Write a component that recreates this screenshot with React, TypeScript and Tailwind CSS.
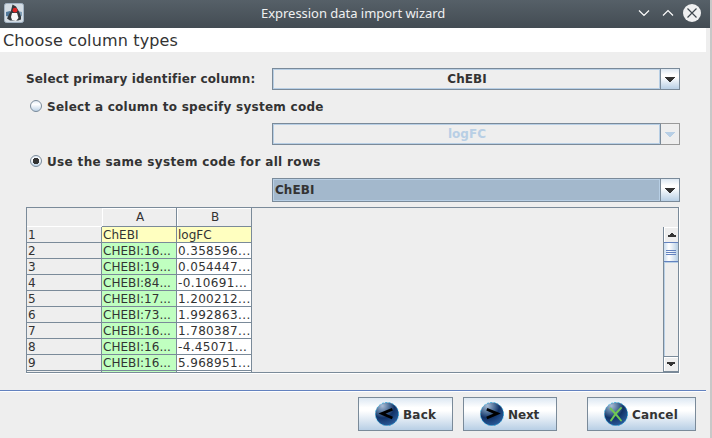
import React from "react";

const rows: [string, string][] = [
  ["ChEBI", "logFC"],
  ["CHEBI:16...", "0.358596..."],
  ["CHEBI:19...", "0.054447..."],
  ["CHEBI:84...", "-0.10691..."],
  ["CHEBI:17...", "1.200212..."],
  ["CHEBI:73...", "1.992863..."],
  ["CHEBI:16...", "1.780387..."],
  ["CHEBI:16...", "-4.45071..."],
  ["CHEBI:16...", "5.968951..."],
];

function Arrow({ color = "#333333", size = 10, up = false }: { color?: string; size?: number; up?: boolean }) {
  return size === 10 ? (
    <svg width="10" height="5" shapeRendering="crispEdges" fill={color}>
      <path d="M0 0h10v1H0zM1 1h8v1H1zM2 2h6v1H2zM3 3h4v1H3zM4 4h2v1H4z" />
    </svg>
  ) : (
    <svg width="8" height="4" viewBox="0 0 8 4" shapeRendering="crispEdges" fill={color}>
      <path d={up ? "M3 0h2v1H3zM2 1h4v1H2zM0 2h8v2H0z" : "M0 0h8v2H0zM2 2h4v1H2zM3 3h2v1H3z"} />
    </svg>
  );
}

function Combo({ text, kind }: { text: string; kind: "normal" | "disabled" | "selected" }) {
  const disabled = kind === "disabled";
  const selected = kind === "selected";
  return (
    <div className={`flex w-[408px] ${selected ? "h-6" : "h-[22px]"}`}>
      <div className="w-[388px] border border-r-0 border-[#7a8a99]">
        <div
          className={`flex h-full items-center border border-[#b8cfe5] ${
            selected ? "justify-start bg-[#a3b8cc] pl-[1px]" : "justify-center pl-px"
          } ${disabled ? "text-[#b8cfe5]" : ""}`}
        >
          <span className="tracking-[0.05px]">{text}</span>
        </div>
      </div>
      <div
        className={`flex w-5 items-center justify-center border ${
          disabled
            ? "border-[#999999] border-l-[#7a8a99]"
            : "border-[#7a8a99] bg-[linear-gradient(#dde8f3,#ffffff_30%,#ffffff_40%,#b8cfe5)]"
        }`}
      >
        <Arrow color={disabled ? "#b8cfe5" : "#333333"} />
      </div>
    </div>
  );
}

function Radio({ checked, label }: { checked?: boolean; label: string }) {
  return (
    <div className="flex h-[14px] items-center pl-[30px]">
      <svg width="12" height="12" viewBox="0 0 12 12">
        <defs>
          <linearGradient id="radioFill" x2="0" y2="1">
            <stop offset="0" stopColor="#dde8f3" />
            <stop offset=".35" stopColor="#fff" />
            <stop offset="1" stopColor="#b8cfe5" />
          </linearGradient>
        </defs>
        <circle cx="6" cy="6" r="5.5" fill="url(#radioFill)" stroke="#7a8a99" />
        {checked && <path d="M4 3h4v1h1v4H8v1H4V8H3V4h1z" fill="#333" shapeRendering="crispEdges" />}
      </svg>
      <span className={`ml-[5px] pt-[2px] ${checked ? "tracking-[0.34px]" : "tracking-[0.26px]"}`}>{label}</span>
    </div>
  );
}

function Orb({ kind }: { kind: "back" | "next" | "cancel" }) {
  return (
    <svg width="24" height="24" viewBox="0 0 24 24" className="shrink-0">
      <defs>
        <radialGradient id="orb" cx=".3" cy=".15" r=".9">
          <stop offset="0" stopColor="#a9bdd6" />
          <stop offset=".35" stopColor="#4c6d96" />
          <stop offset=".58" stopColor="#123266" />
          <stop offset="1" stopColor="#2a5c9c" />
        </radialGradient>
      </defs>
      <circle cx="12" cy="12" r="11.6" fill="url(#orb)" stroke="#25a8dc" strokeWidth=".8" strokeDasharray="2 1.5" />
      {kind === "back" && <path d="M17.4 7.2L7 11.6L17.4 16" fill="none" stroke="#000" strokeWidth="2.8" />}
      {kind === "next" && <path d="M6.8 7.2L17.2 11.6L6.8 16" fill="none" stroke="#000" strokeWidth="2.8" />}
      {kind === "cancel" && (
        <path d="M6.5 6.5Q11 11 17 18.5M17 6Q11.5 11 7 18.5" fill="none" stroke="#70c853" strokeWidth="1.9" strokeLinecap="round" />
      )}
    </svg>
  );
}

function WizardButton({ kind, label, width }: { kind: "back" | "next" | "cancel"; label: string; width: string }) {
  return (
    <button
      className={`flex h-[34px] items-center border border-[#7a8a99] bg-[linear-gradient(#dde8f3,#ffffff_30%,#ffffff_40%,#b8cfe5)] pl-4 ${width}`}
    >
      <Orb kind={kind} />
      <span className={`ml-1 pt-[2px] ${kind === "next" ? "tracking-[-0.1px]" : "tracking-[0.2px]"}`}>{label}</span>
    </button>
  );
}

function TitleBar() {
  return (
    <div className="flex h-7 w-[710px] items-center bg-[linear-gradient(#566068,#434c53)] pl-1">
      <svg width="20" height="20" viewBox="0 0 20 20" className="-mt-[2px] shrink-0">
        <rect x=".5" y=".5" width="19" height="19" rx="2" fill="#d3dce4" stroke="#a2b3c4" />
        <path d="M2 9l4-1 2 3-2 3-4-1z" fill="#50789a" />
        <path d="M14 8l4 1v4l-4 1z" fill="#7f9eb7" />
        <path d="M8.5 1.5l3.5 2 3 5 2 5v3l-3 1H6l-3-2 2-4 2-4z" fill="#33383c" />
        <path d="M8 10l5 0 1.5 5-2.5 3-4-1-1-3z" fill="#f6f6f6" />
        <circle cx="11" cy="7.2" r="2.4" fill="#e02626" />
      </svg>
      <span className="ml-[237px] w-[371px] whitespace-nowrap pb-[2px] font-['Noto_Sans',sans-serif] text-[13px] font-normal leading-[26px] tracking-[-0.03px] text-[#eff0f1]">
        Expression data import wizard
      </span>
      <svg width="78" height="28" viewBox="632 0 78 28" className="shrink-0" fill="none" stroke="#fcfcfc">
        <path d="M639 10.5l5 5 5-5M663 15.5l5-5 5 5" strokeWidth="1.2" />
        <circle cx="692" cy="13" r="9" fill="#eff0f1" stroke="none" />
        <path d="M687.5 8.5l9 9M696.5 8.5l-9 9" stroke="#3f484f" strokeWidth="1.2" />
      </svg>
    </div>
  );
}

function DataTable() {
  return (
    <div className="h-[167px] w-[654px] border-b border-r border-white">
      <div className="flex h-[166px] justify-between overflow-hidden border border-[#7a8a99] text-[12px] font-normal">
        <div className="w-[225px]">
          <div className="flex h-[19px] text-center leading-[18px]">
            <div className="h-[19px] w-[75px] border-b border-r border-white border-r-[#eeeeee]" />
            <div className="h-[19px] w-[75px] border-b border-r border-[#7a8a99] pl-[2px] shadow-[inset_1px_1px_0_#fff]">A</div>
            <div className="h-[19px] w-[75px] border-b border-r border-[#7a8a99] pl-[2px] shadow-[inset_1px_1px_0_#fff]">B</div>
          </div>
          {rows.map(([a, b], i) => (
            <div key={i} className="flex h-4 whitespace-nowrap leading-[17px]">
              <div className="w-[75px] border-b border-r border-[#7a8a99] pl-[1px]">{i + 1}</div>
              <div className={`w-[75px] overflow-hidden border-b border-r border-[#7a8a99] pl-[1px] tracking-[0.04px] ${i ? "bg-[#c0ffc0]" : "bg-[#ffffc0]"}`}>{a}</div>
              <div className={`w-[75px] overflow-hidden border-b border-r border-[#7a8a99] pl-[1px] ${i ? "bg-white tracking-[0.35px]" : "bg-[#ffffc0]"}`}>{b}</div>
            </div>
          ))}
          <div className="flex h-[1px]">
            <div className="w-[75px] border-r border-[#7a8a99]" />
            <div className="w-[75px] border-r border-[#7a8a99] bg-[#c0ffc0]" />
            <div className="w-[75px] border-r border-[#7a8a99] bg-white" />
          </div>
        </div>
        <div className="mt-[19px] flex h-[145px] w-[15px] flex-col border-l border-[#7a8a99]">
          <div className="flex h-[15px] items-center justify-center border-l border-t border-white">
            <Arrow size={8} up />
          </div>
          <div className="flex h-5 flex-col items-center justify-center gap-px border-y border-[#6382bf] bg-[linear-gradient(90deg,#c8dbee,#ffffff_35%,#b8cfe5)]">
            <div className="h-px w-[10px] bg-[#6382bf]" />
            <div className="h-px w-[10px] bg-[#6382bf]" />
            <div className="h-px w-[10px] bg-[#6382bf]" />
          </div>
          <div className="flex-1 border-l border-t border-[#b8cfe5]" />
          <div className="flex h-4 items-center justify-center border-y border-[#7a8a99] shadow-[inset_1px_1px_0_#fff]">
            <Arrow size={8} />
          </div>
        </div>
      </div>
    </div>
  );
}

export default function App() {
  return (
    <div className="h-[438px] w-[712px] overflow-hidden bg-[linear-gradient(90deg,#a5a5a5,#c8c8c8)] font-['DejaVu_Sans',sans-serif] text-[12px] font-bold leading-[14px] text-[#333333]">
      <TitleBar />
      <div className="h-[410px] w-[710px] bg-[#eeeeee]">
        <div className="h-6 w-[706px] bg-white pl-[3px] pt-px text-[16px] font-normal leading-6 tracking-[0.15px]">Choose column types</div>
        <div className="flex h-[38px] items-end pl-[26px]">
          <div className="w-[246px] self-end pb-1 tracking-[0.17px]">Select primary identifier column:</div>
          <Combo text="ChEBI" kind="normal" />
        </div>
        <div className="pt-[9px]"><Radio label="Select a column to specify system code" /></div>
        <div className="pl-[272px] pt-[10px]"><Combo text="logFC" kind="disabled" /></div>
        <div className="pt-[9px]"><Radio checked label="Use the same system code for all rows" /></div>
        <div className="pl-[272px] pt-[10px]"><Combo text="ChEBI" kind="selected" /></div>
        <div className="pl-[26px] pt-[5px]"><DataTable /></div>
        <div className="mt-4 h-[2px] w-[706px] border-b border-t border-b-white border-t-[#6382bf]" />
        <div className="flex pl-[358px] pt-[5px]">
          <WizardButton kind="back" label="Back" width="w-[95px]" />
          <div className="w-[10px]" />
          <WizardButton kind="next" label="Next" width="w-[94px]" />
          <div className="w-[30px]" />
          <WizardButton kind="cancel" label="Cancel" width="w-[109px]" />
        </div>
      </div>
    </div>
  );
}
